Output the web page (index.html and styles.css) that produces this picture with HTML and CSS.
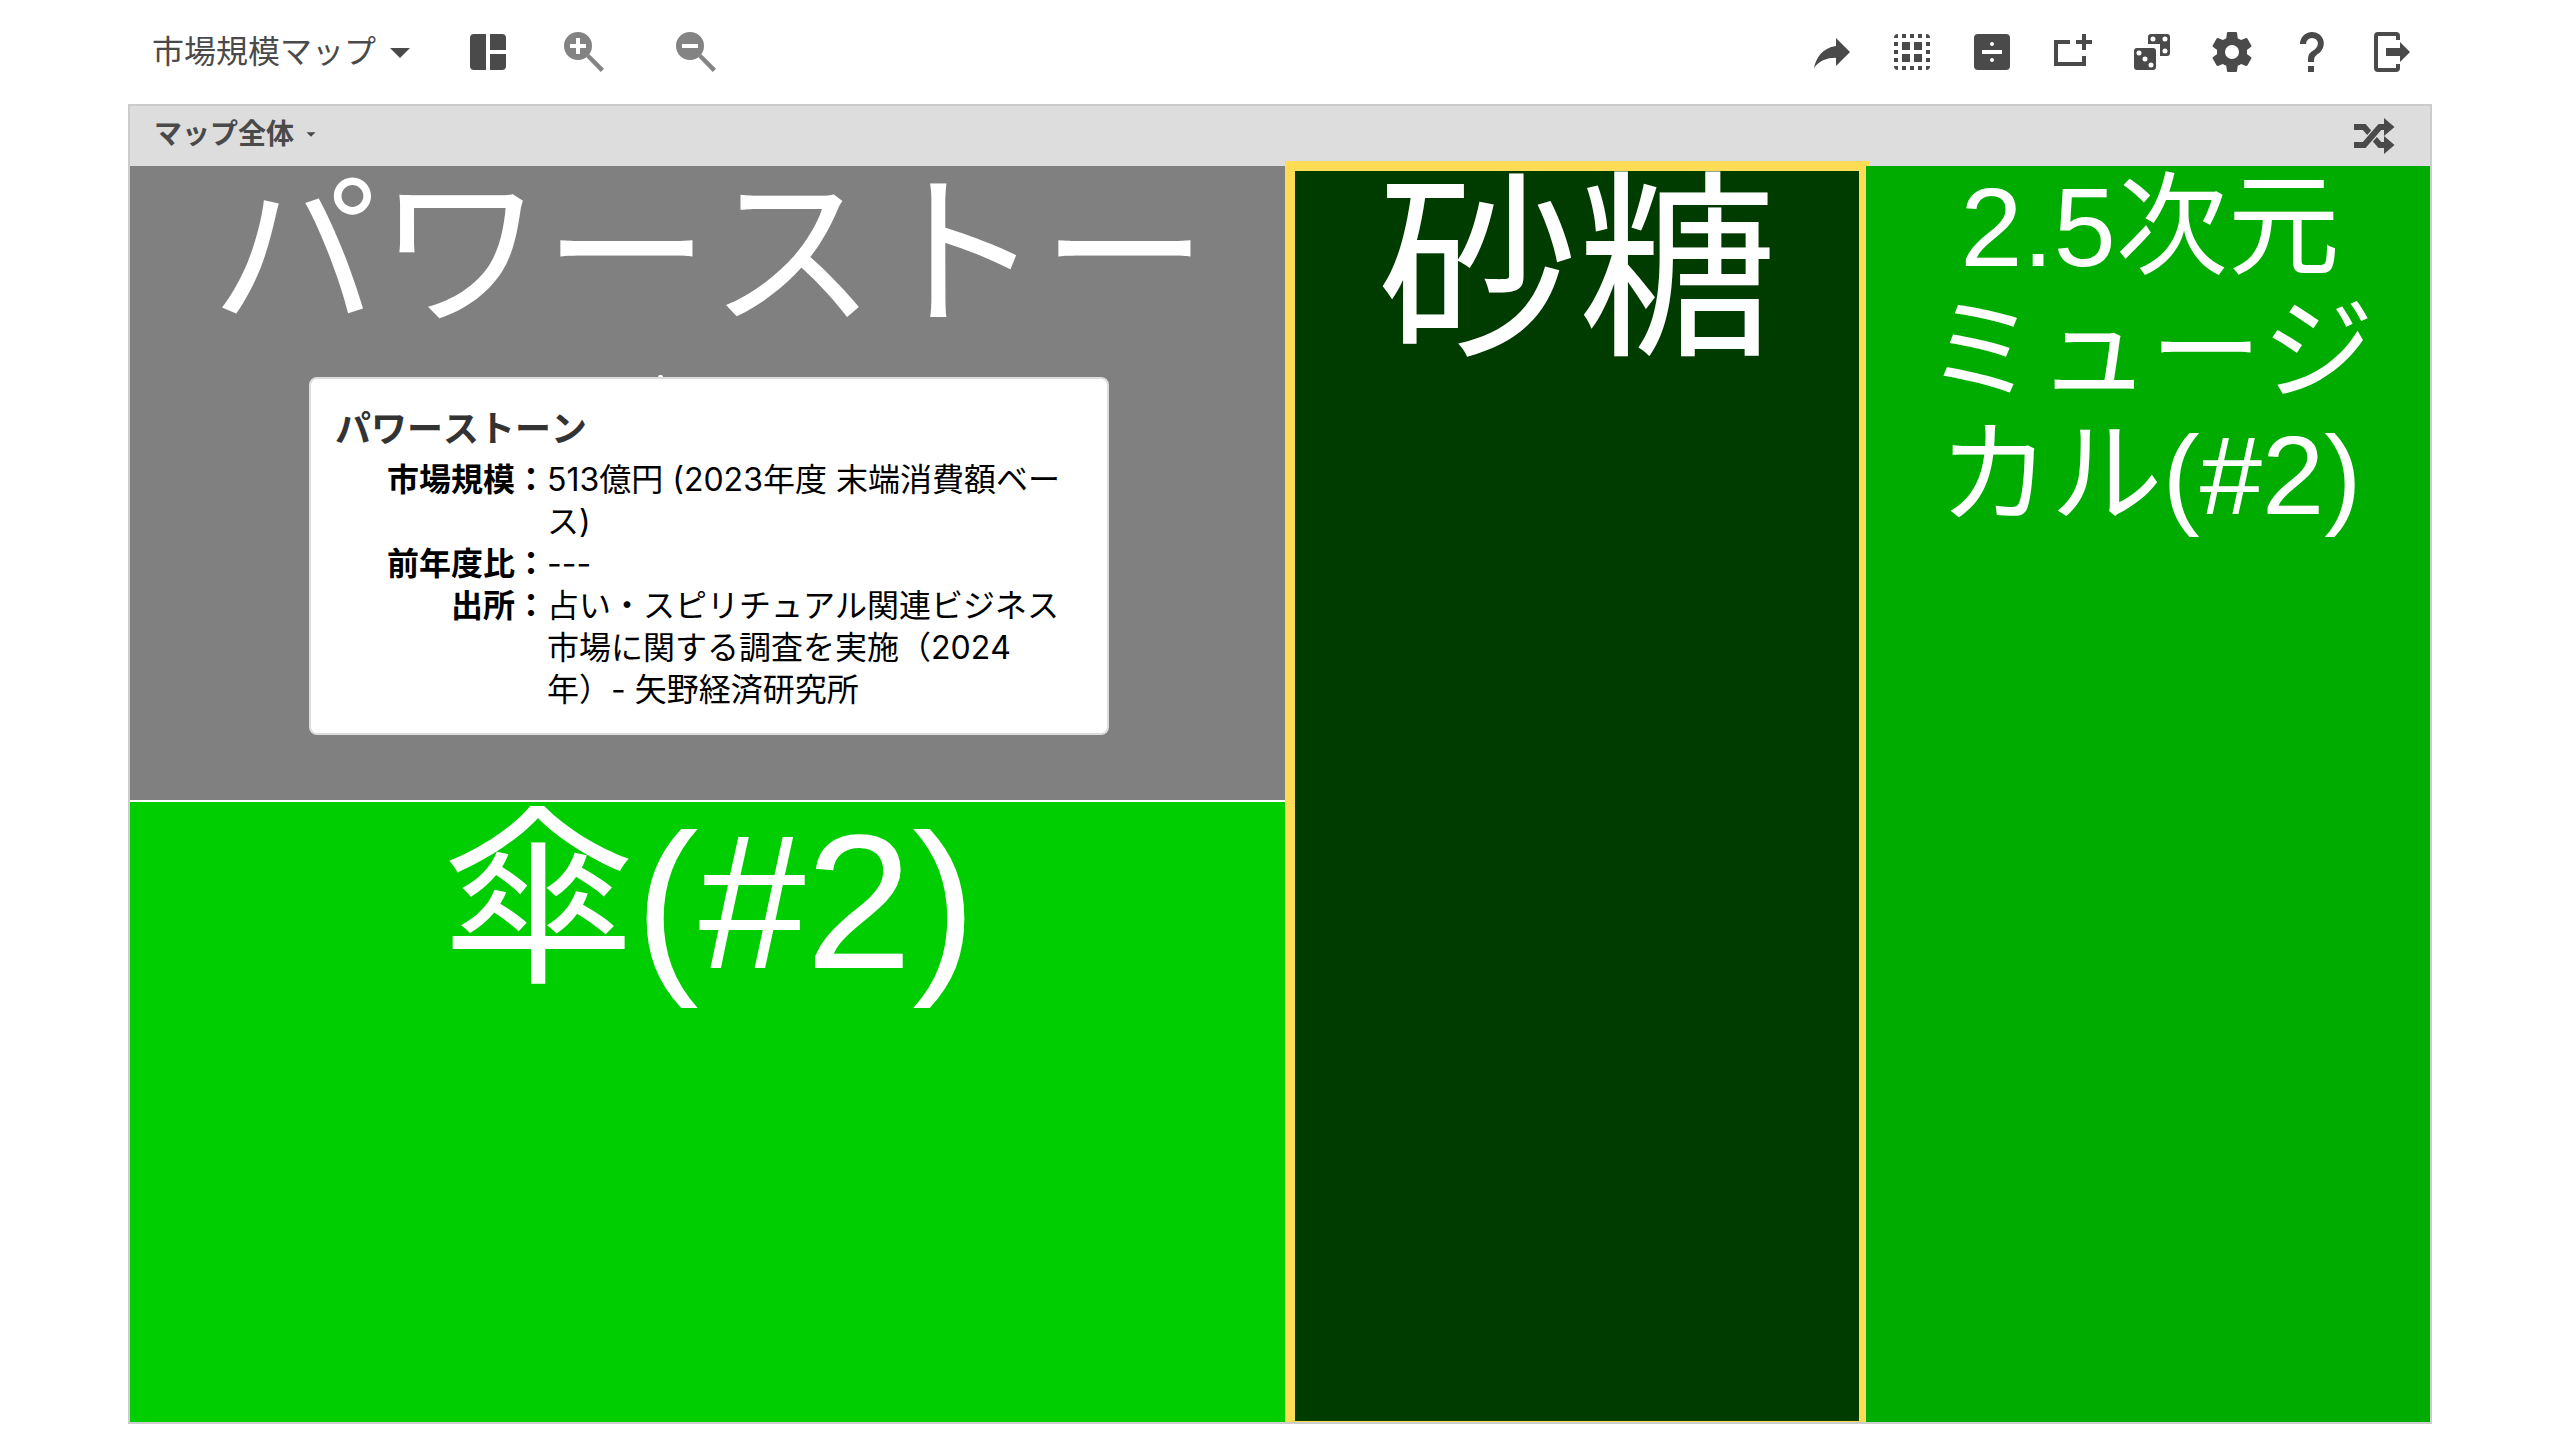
FILE: index.html
```html
<!DOCTYPE html>
<html lang="ja">
<head>
<meta charset="utf-8">
<title>市場規模マップ</title>
<meta name="viewport" content="width=device-width, initial-scale=1">
<link rel="stylesheet" href="styles.css">
</head>
<body>
<header class="toolbar">
  <button class="map-menu" type="button">市場規模マップ<svg class="icon" viewBox="0 0 24 24" aria-hidden="true"><path d="M7 10l5 5 5-5z"/></svg></button>
  <button class="tool tool-layout" type="button" aria-label="レイアウト"><svg class="icon" viewBox="0 0 24 24"><path d="M11 21H5a2 2 0 0 1-2-2V5a2 2 0 0 1 2-2h6zM13 13h8v6a2 2 0 0 1-2 2h-6zM13 3h6a2 2 0 0 1 2 2v6h-8z"/></svg></button>
  <button class="tool tool-zoom" type="button" aria-label="拡大"><svg class="icon" viewBox="0 0 24 24"><path fill-rule="evenodd" d="M9 2a7 7 0 1 0 0 14A7 7 0 0 0 9 2zM8 5h2v3h3v2h-3v3H8v-3H5V8h3z"/><path d="M13.2 14.6l1.5-1.5 7.3 7.3-1.6 1.6z"/></svg></button>
  <button class="tool tool-zoom" type="button" aria-label="縮小"><svg class="icon" viewBox="0 0 24 24"><path fill-rule="evenodd" d="M9 2a7 7 0 1 0 0 14A7 7 0 0 0 9 2zM5 8h8v2H5z"/><path d="M13.2 14.6l1.5-1.5 7.3 7.3-1.6 1.6z"/></svg></button>
  <nav class="actions" aria-label="操作">
    <button class="tool" type="button" aria-label="共有"><svg class="icon" viewBox="0 0 24 24"><path d="M21 12l-7-7v4C7 10 4 15 3 20c2.500-3.500 6-5.100 11-5.100V19z"/></svg></button>
    <button class="tool" type="button" aria-label="すべて選択"><svg class="icon" viewBox="0 0 24 24"><path d="M7 7h4v4H7zM13 7h4v4h-4zM7 13h4v4H7zM13 13h4v4h-4zM7 3h2v2H7zM11 3h2v2h-2zM15 3h2v2h-2zM7 19h2v2H7zM11 19h2v2h-2zM15 19h2v2h-2zM3 7h2v2H3zM3 11h2v2H3zM3 15h2v2H3zM19 7h2v2h-2zM19 11h2v2h-2zM19 15h2v2h-2zM5 3v2H3a2 2 0 0 1 2-2zM19 3a2 2 0 0 1 2 2h-2zM3 19h2v2a2 2 0 0 1-2-2zM19 19h2a2 2 0 0 1-2 2z"/></svg></button>
    <button class="tool" type="button" aria-label="分割"><svg class="icon" viewBox="0 0 24 24"><path fill-rule="evenodd" d="M5 3h14a2 2 0 0 1 2 2v14a2 2 0 0 1-2 2H5a2 2 0 0 1-2-2V5a2 2 0 0 1 2-2zM7 11v2h10v-2zM12 7a1 1 0 1 0 0 2 1 1 0 0 0 0-2zM12 15a1 1 0 1 0 0 2 1 1 0 0 0 0-2z"/></svg></button>
    <button class="tool" type="button" aria-label="追加"><svg class="icon" viewBox="0 0 24 24"><path d="M3 6h8v2H5v9h12v-3h2v5H3zM17 3h2v3h3v2h-3v3h-2V8h-3V6h3z"/></svg></button>
    <button class="tool" type="button" aria-label="ランダム"><svg class="icon" viewBox="0 0 24 24"><path fill-rule="evenodd" d="M4.500 10h8a1.500 1.500 0 0 1 1.500 1.500v8a1.500 1.500 0 0 1-1.500 1.500h-8A1.500 1.500 0 0 1 3 19.500v-8A1.500 1.500 0 0 1 4.500 10zM5.500 11.200a1.250 1.250 0 1 0 0 2.500 1.250 1.250 0 0 0 0-2.500zM8.500 14.250a1.250 1.250 0 1 0 0 2.500 1.250 1.250 0 0 0 0-2.500zM11.500 17.250a1.250 1.250 0 1 0 0 2.500 1.250 1.250 0 0 0 0-2.500zM11.500 3h8A1.500 1.500 0 0 1 21 4.500v8a1.500 1.500 0 0 1-1.500 1.500H16V8h-6V4.500A1.500 1.500 0 0 1 11.500 3zM12.500 4.200a1.250 1.250 0 1 0 0 2.500 1.250 1.250 0 0 0 0-2.500zM18.500 4.200a1.250 1.250 0 1 0 0 2.500 1.250 1.250 0 0 0 0-2.500zM18.500 10.250a1.250 1.250 0 1 0 0 2.500 1.250 1.250 0 0 0 0-2.500z"/></svg></button>
    <button class="tool" type="button" aria-label="設定"><svg class="icon" viewBox="0 0 24 24"><path d="M12,15.500A3.500,3.500 0 0,1 8.500,12A3.500,3.500 0 0,1 12,8.500A3.500,3.500 0 0,1 15.500,12A3.500,3.500 0 0,1 12,15.500M19.430,12.970C19.470,12.650 19.500,12.330 19.500,12C19.500,11.670 19.470,11.340 19.430,11L21.540,9.370C21.730,9.220 21.780,8.950 21.660,8.730L19.660,5.270C19.540,5.050 19.270,4.960 19.050,5.050L16.560,6.050C16.040,5.660 15.500,5.320 14.870,5.070L14.500,2.420C14.460,2.180 14.250,2 14,2H10C9.750,2 9.540,2.180 9.500,2.420L9.130,5.070C8.500,5.320 7.960,5.660 7.440,6.050L4.950,5.050C4.730,4.960 4.460,5.050 4.340,5.270L2.340,8.730C2.210,8.950 2.270,9.220 2.460,9.370L4.570,11C4.530,11.340 4.500,11.670 4.500,12C4.500,12.330 4.530,12.650 4.570,12.970L2.460,14.630C2.270,14.780 2.210,15.050 2.340,15.270L4.340,18.730C4.460,18.950 4.730,19.030 4.950,18.950L7.440,17.940C7.960,18.340 8.500,18.680 9.130,18.930L9.500,21.580C9.540,21.820 9.750,22 10,22H14C14.250,22 14.460,21.820 14.500,21.580L14.870,18.930C15.500,18.670 16.040,18.340 16.560,17.940L19.050,18.950C19.270,19.030 19.540,18.950 19.660,18.730L21.660,15.270C21.780,15.050 21.730,14.780 21.540,14.630L19.430,12.970Z"/></svg></button>
    <button class="tool" type="button" aria-label="ヘルプ"><svg class="icon" viewBox="0 0 24 24"><path d="M10,19H13V22H10V19M12,2C17.350,2.220 19.680,7.620 16.500,11.670C15.670,12.670 14.330,13.330 13.670,14.170C13,15 13,16 13,17H10C10,15.330 10,13.920 10.670,12.920C11.330,11.920 12.670,11.330 13.500,10.670C15.920,8.430 15.320,5.260 12,5A3,3 0 0,0 9,8H6A6,6 0 0,1 12,2Z"/></svg></button>
    <button class="tool" type="button" aria-label="ログアウト"><svg class="icon" viewBox="0 0 24 24"><path d="M5 2h9a2 2 0 0 1 2 2v2h-2V4H5v16h9v-2h2v2a2 2 0 0 1-2 2H5a2 2 0 0 1-2-2V4a2 2 0 0 1 2-2zM9 10h7V7l5 5-5 5v-3H9z"/></svg></button>
  </nav>
</header>
<main class="map">
  <div class="map-bar">
    <button class="scope-menu" type="button">マップ全体<svg class="icon-small" viewBox="0 0 24 24" aria-hidden="true"><path d="M7 10l5 5 5-5z"/></svg></button>
    <button class="tool" type="button" aria-label="シャッフル"><svg class="icon" viewBox="0 0 24 24"><path d="M17,3L22.250,7.500L17,12L22.250,16.500L17,21V18H14.260L11.440,14.770L13.430,12.500L15.620,15H17V9H15.620L7.770,18H2V15H6.400L14.260,6H17M2,6H7.770L10.590,9.220L8.600,11.500L6.400,9H2V6Z"/></svg></button>
  </div>
  <div class="tiles">
    <div class="stack">
      <section class="tile tile-stone">
        <h2 class="tile-name name-medium">パワーストー</h2>
        <div class="tooltip" role="tooltip">
          <h3 class="tooltip-title">パワーストーン</h3>
          <dl class="facts">
            <dt>市場規模：</dt><dd>513億円 (2023年度 末端消費額ベース)</dd>
            <dt>前年度比：</dt><dd>---</dd>
            <dt>出所：</dt><dd>占い・スピリチュアル関連ビジネス市場に関する調査を実施（2024年）- 矢野経済研究所</dd>
          </dl>
        </div>
      </section>
      <section class="tile tile-umbrella"><h2 class="tile-name name-large">傘(#2)</h2></section>
    </div>
    <section class="tile tile-sugar"><h2 class="tile-name">砂糖</h2></section>
    <section class="tile tile-musical"><h2 class="tile-name name-small">2.5次元<br>ミュージ<br>カル(#2)</h2></section>
  </div>
</main>
</body>
</html>
```
FILE: styles.css
```css
* {
  box-sizing: border-box;
}

body {
  margin: 0;
  min-height: 100vh;
  padding: 0 5% 16px;
  display: flex;
  flex-direction: column;
  background: #fff;
  color: #000;
  font-family: Inter, "Noto Sans CJK JP", sans-serif;
  font-kerning: none;
  text-spacing-trim: space-all;
}

button {
  margin: 0;
  padding: 0;
  border: 0;
  background: none;
  color: #4a4a4a;
  font: inherit;
  display: flex;
  align-items: center;
  cursor: pointer;
}

h2,
h3,
dl,
dd {
  margin: 0;
}

.icon {
  display: block;
  width: 48px;
  height: 48px;
  fill: currentColor;
}

.icon-small {
  display: block;
  width: 22px;
  height: 22px;
  fill: currentColor;
}

/* Toolbar above the map */
.toolbar {
  display: flex;
  align-items: center;
  height: 104px;
  padding: 0 16px 0 24px;
}

.map-menu {
  font-size: 32px;
  line-height: 48px;
}

.tool-layout {
  margin-left: 40px;
}

.tool-zoom {
  margin-left: 48px;
  color: #838383;
}

.tool-zoom + .tool-zoom {
  margin-left: 64px;
}

.actions {
  display: flex;
  gap: 32px;
  margin-left: auto;
}

/* Map frame */
.map {
  flex: 1;
  display: flex;
  flex-direction: column;
  border: 2px solid #ccc;
  overflow: hidden;
}

.map-bar {
  display: flex;
  align-items: center;
  justify-content: space-between;
  height: 60px;
  padding: 0 32px 0 24px;
  background: #ddd;
}

.scope-menu {
  gap: 6px;
  padding-bottom: 4px;
  font-size: 28px;
  font-weight: 700;
  line-height: 48px;
}

.tiles {
  flex: 1;
  display: grid;
  grid-template-columns: 1155fr 581fr 564fr;
}

.stack {
  display: grid;
  grid-template-rows: 634fr 620fr;
  gap: 2px;
}

.tile {
  position: relative;
  padding-left: 4px;
  color: #fff;
  text-align: center;
}

.tile-name {
  font-family: "Liberation Sans", "Noto Sans CJK JP", sans-serif;
  font-size: 200px;
  font-weight: 400;
  line-height: 210px;
}

.name-large {
  font-size: 192px;
  line-height: 200px;
}

.name-medium {
  font-size: 166px;
  line-height: 178px;
}

.name-small {
  font-size: 112px;
  line-height: 124px;
}

.tile-stone {
  background: #808080;
}

.tile-umbrella {
  background: #00ce00;
}

.tile-sugar {
  background: #003c00;
}

/* Selection frame, tucked under the next tile */
.tile-sugar::before {
  content: "";
  position: absolute;
  inset: -5px -3px -9px 0;
  border: 10px solid #ffdc55;
}

.tile-musical {
  background: #00ac00;
}

.tooltip {
  position: absolute;
  top: 211px;
  left: 179px;
  width: 800px;
  padding: 24px 24px 22px;
  border: 2px solid #ddd;
  border-radius: 8px;
  background: #fff;
  color: #000;
  text-align: left;
}

/* Small pointer on the upper edge */
.tooltip::before {
  content: "";
  position: absolute;
  top: -4px;
  left: 347px;
  width: 5px;
  height: 2px;
  border-radius: 2px 2px 0 0;
  background: #fff;
}

.tooltip-title {
  margin-bottom: 4px;
  color: #333;
  font-size: 36px;
  font-weight: 700;
  line-height: 52px;
}

.facts {
  display: grid;
  grid-template-columns: 212px 516px;
  font-size: 32px;
  line-height: 42px;
}

.facts dt {
  font-weight: 700;
  text-align: right;
}
```
